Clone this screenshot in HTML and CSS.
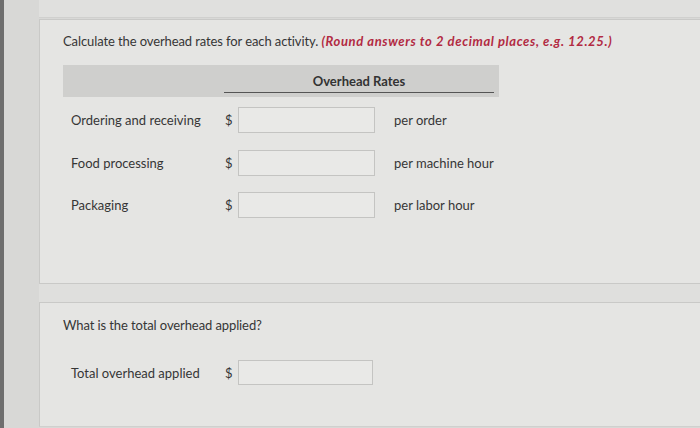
FILE: index.html
```html
<!DOCTYPE html>
<html>
<head>
<meta charset="utf-8">
<link rel="stylesheet" href="styles.css">
</head>
<body>
<div class="page">
  <div class="prev"></div>
  <section class="card card-one">
    <p class="question">Calculate the overhead rates for each activity. <em class="hint">(Round answers to 2 decimal places, e.g. 12.25.)</em></p>
    <div class="table">
      <div class="head">
        <div class="head-spacer"></div>
        <div class="head-title">Overhead Rates</div>
      </div>
      <div class="rows">
        <div class="row">
          <span class="label">Ordering and receiving</span>
          <span class="dollar">$</span>
          <span class="input"></span>
          <span class="unit">per order</span>
        </div>
        <div class="row">
          <span class="label">Food processing</span>
          <span class="dollar">$</span>
          <span class="input"></span>
          <span class="unit">per machine hour</span>
        </div>
        <div class="row">
          <span class="label">Packaging</span>
          <span class="dollar">$</span>
          <span class="input"></span>
          <span class="unit">per labor hour</span>
        </div>
      </div>
    </div>
  </section>
  <div class="between"></div>
  <section class="card card-two">
    <p class="question">What is the total overhead applied?</p>
    <div class="row total-row">
      <span class="label">Total overhead applied</span>
      <span class="dollar">$</span>
      <span class="input input-total"></span>
    </div>
  </section>
</div>
</body>
</html>
```

FILE: styles.css
```css
html, body {
  margin: 0;
  padding: 0;
}
body {
  width: 700px;
  height: 428px;
  overflow: hidden;
  background: #d8d8d6;
  font-family: Lato, "Open Sans", sans-serif;
  color: #363636;
  font-size: 13px;
}
.page {
  width: 700px;
  height: 428px;
  border-left: 4px solid #6e6e6e;
  padding-left: 35px;
  display: flex;
  flex-direction: column;
  box-sizing: border-box;
}
.prev {
  height: 17px;
  border-bottom: 1px solid #d0d0ce;
  background: #e0e0de;
  flex: none;
}
.between {
  height: 18px;
  flex: none;
  background: #dfdfdd;
}
.card {
  background: #e5e5e3;
  border: 1px solid #c9c9c7;
  border-right: none;
  box-sizing: border-box;
  padding: 13px 23px 0;
  flex: none;
}
.card-one {
  margin-top: 1px;
  height: 265px;
}
.card-two {
  height: 125px;
  padding-top: 14px;
  border-bottom-color: #d0d0ce;
}
.question {
  margin: 0;
  line-height: 16px;
  letter-spacing: -0.1px;
}
.hint {
  color: #b22a42;
  font-weight: 700;
  font-style: italic;
  letter-spacing: 0.62px;
}
.table {
  margin-top: 16px;
  width: 436px;
}
.head {
  height: 32px;
  background: #cfcfcd;
  display: flex;
  align-items: flex-end;
  padding-bottom: 4px;
  box-sizing: border-box;
}
.head-spacer {
  width: 161px;
  flex: none;
}
.head-title {
  width: 270px;
  text-align: center;
  font-weight: 700;
  border-bottom: 1.5px solid #555;
  line-height: 17px;
  padding-bottom: 2px;
  color: #333;
}
.rows {
  display: flex;
  flex-direction: column;
  gap: 16.5px;
  padding-top: 10px;
  padding-left: 8px;
}
.row {
  display: flex;
  align-items: center;
  height: 26px;
}
.label {
  width: 154px;
  flex: none;
}
.dollar {
  width: 13px;
  flex: none;
}
.input {
  width: 137px;
  height: 26px;
  box-sizing: border-box;
  border: 1px solid #c4c4c2;
  background: #e9e9e7;
  flex: none;
}
.unit {
  margin-left: 19px;
}
.total-row {
  margin-top: 27px;
  padding-left: 8px;
  height: 25px;
}
.input-total {
  width: 135px;
  height: 25px;
}
```
